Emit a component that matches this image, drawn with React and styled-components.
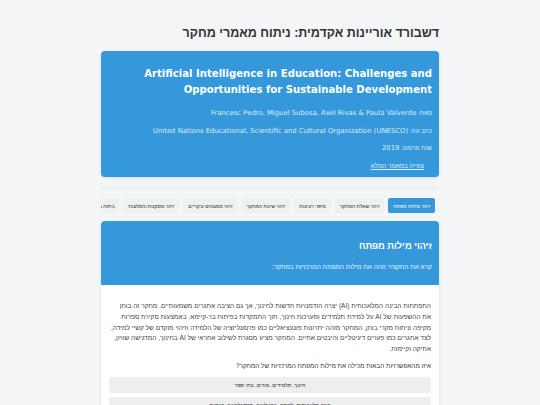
import React from "react";
import styled, { createGlobalStyle } from "styled-components";

const Global = createGlobalStyle`
  html, body {
    margin: 0;
    height: 405px;
    overflow: hidden;
    background: #f3f5f7;
  }
  body {
    font-family: "Liberation Sans", sans-serif;
  }
`;

const Page = styled.div`
  direction: rtl;
  width: 338px;
  margin: 0 auto;
  padding-top: 24px;
`;

const Heading = styled.h1`
  margin: 0 0 9px;
  font-size: 12.5px;
  line-height: 18px;
  font-weight: 700;
  color: #333;
`;

const Hero = styled.header`
  background: #3498db;
  color: #fff;
  border-radius: 4px;
  padding: 15px 7px 7px;
  height: 126px;
  box-sizing: border-box;
  box-shadow: 0 1px 3px rgba(0, 0, 0, 0.1);
`;

const PaperTitle = styled.h2`
  margin: 0 0 11px;
  font-family: "DejaVu Sans", sans-serif;
  font-size: 10.1px;
  line-height: 16px;
  font-weight: 700;
`;

const Meta = styled.p`
  margin: 0 0 9.5px;
  font-size: 6.1px;
  line-height: 8px;
  color: #dcedf9;
`;

const MetaValue = styled.span`
  font-family: "DejaVu Sans", sans-serif;
  font-size: 6.85px;
`;

const FullLink = styled.a`
  display: block;
  margin-right: 8px;
  font-size: 6.3px;
  line-height: 8px;
  color: #dcedf9;
  text-decoration: underline;
`;

const TabsTrack = styled.nav`
  margin-top: 9px;
  padding-top: 12px;
  position: relative;
  overflow: hidden;
  display: flex;
  gap: 4px;
  height: 15px;
  &::before {
    content: "";
    position: absolute;
    top: 0;
    left: 0;
    right: 0;
    height: 4px;
    background: #eef0f2;
  }
`;

const Tab = styled.button`
  flex: none;
  border: 0;
  height: 15px;
  padding: 0 5px;
  border-radius: 2px;
  font-family: inherit;
  font-size: 5px;
  font-weight: 400;
  background: ${(p) => (p.$active ? "#3498db" : "#eef0f2")};
  color: ${(p) => (p.$active ? "#fff" : "#333")};
  margin-right: ${(p) => (p.$active ? "4px" : "0")};
`;

const Section = styled.section`
  margin-top: 8px;
  background: #fff;
  border-radius: 4px 4px 0 0;
  box-shadow: 0 1px 3px rgba(0, 0, 0, 0.1);
`;

const SectionHead = styled.div`
  background: #3498db;
  color: #fff;
  height: 64px;
  box-sizing: border-box;
  padding: 19px 7px 0;
  border-radius: 4px 4px 0 0;
`;

const SectionTitle = styled.h3`
  margin: 0 0 11px;
  font-size: 9.25px;
  line-height: 12px;
  font-weight: 700;
`;

const SectionHint = styled.p`
  margin: 0;
  font-size: 6.5px;
  line-height: 8px;
  color: #e6f3fc;
`;

const SectionBody = styled.div`
  padding: 16px 8px 0 8px;
`;

const Abstract = styled.p`
  margin: 0 0 5.5px -4px;
  font-size: 6.55px;
  line-height: 10.8px;
  color: #444;
`;

const Question = styled.p`
  margin: 0 0 5.5px;
  font-size: 6.4px;
  line-height: 11px;
  color: #333;
`;

const Option = styled.button`
  display: block;
  width: 100%;
  height: 16px;
  margin-bottom: 4px;
  border: 0;
  border-radius: 2px;
  background: #eeeeee;
  color: #333;
  font-family: inherit;
  font-size: 5.3px;
  text-align: center;
`;

const tabs = [
  "זיהוי מילות מפתח",
  "זיהוי שאלת המחקר",
  "מיפוי רעיונות",
  "זיהוי שיטת המחקר",
  "זיהוי ממצאים עיקריים",
  "זיהוי מסקנות והמלצות",
  "ניתוח ביקורתי",
];

export default function App() {
  return (
    <Page>
      <Global />
      <Heading>דשבורד אוריינות אקדמית: ניתוח מאמרי מחקר</Heading>
      <Hero>
        <PaperTitle>Artificial Intelligence in Education: Challenges and Opportunities for Sustainable Development</PaperTitle>
        <Meta>מאת: <MetaValue>Francesc Pedro, Miguel Subosa, Axel Rivas &amp; Paula Valverde</MetaValue></Meta>
        <Meta>כתב עת: <MetaValue>United Nations Educational, Scientific and Cultural Organization (UNESCO)</MetaValue></Meta>
        <Meta>שנת פרסום: <MetaValue>2019</MetaValue></Meta>
        <FullLink href="#">צפייה במאמר המלא</FullLink>
      </Hero>
      <TabsTrack>
        {tabs.map((t, i) => (
          <Tab key={t} $active={i === 0}>{t}</Tab>
        ))}
      </TabsTrack>
      <Section>
        <SectionHead>
          <SectionTitle>זיהוי מילות מפתח</SectionTitle>
          <SectionHint>קרא את התקציר וזהה את מילות המפתח המרכזיות במחקר:</SectionHint>
        </SectionHead>
        <SectionBody>
          <Abstract>
            התפתחות הבינה המלאכותית (AI) יצרה הזדמנויות חדשות לחינוך, אך גם הציבה אתגרים משמעותיים. מחקר זה בוחן<br />
            את ההשפעות של AI על למידת תלמידים ומערכות חינוך, תוך התמקדות בפיתוח בר-קיימא. באמצעות סקירת ספרות<br />
            מקיפה וניתוח מקרי בוחן, המחקר מזהה יתרונות פוטנציאליים כמו פרסונליזציה של הלמידה וזיהוי מוקדם של קשיי למידה,<br />
            לצד אתגרים כמו פערים דיגיטליים והיבטים אתיים. המחקר מציע מסגרת לשילוב אחראי של AI בחינוך, המדגישה שוויון,<br />
            אתיקה וקיימות.
          </Abstract>
          <Question>איזו מהאפשרויות הבאות מכילה את מילות המפתח המרכזיות של המחקר?</Question>
          <Option>חינוך, תלמידים, מורים, בתי ספר</Option>
          <Option>בינה מלאכותית, למידה, טכנולוגיה, פרסונליזציה, קיימות</Option>
        </SectionBody>
      </Section>
    </Page>
  );
}
